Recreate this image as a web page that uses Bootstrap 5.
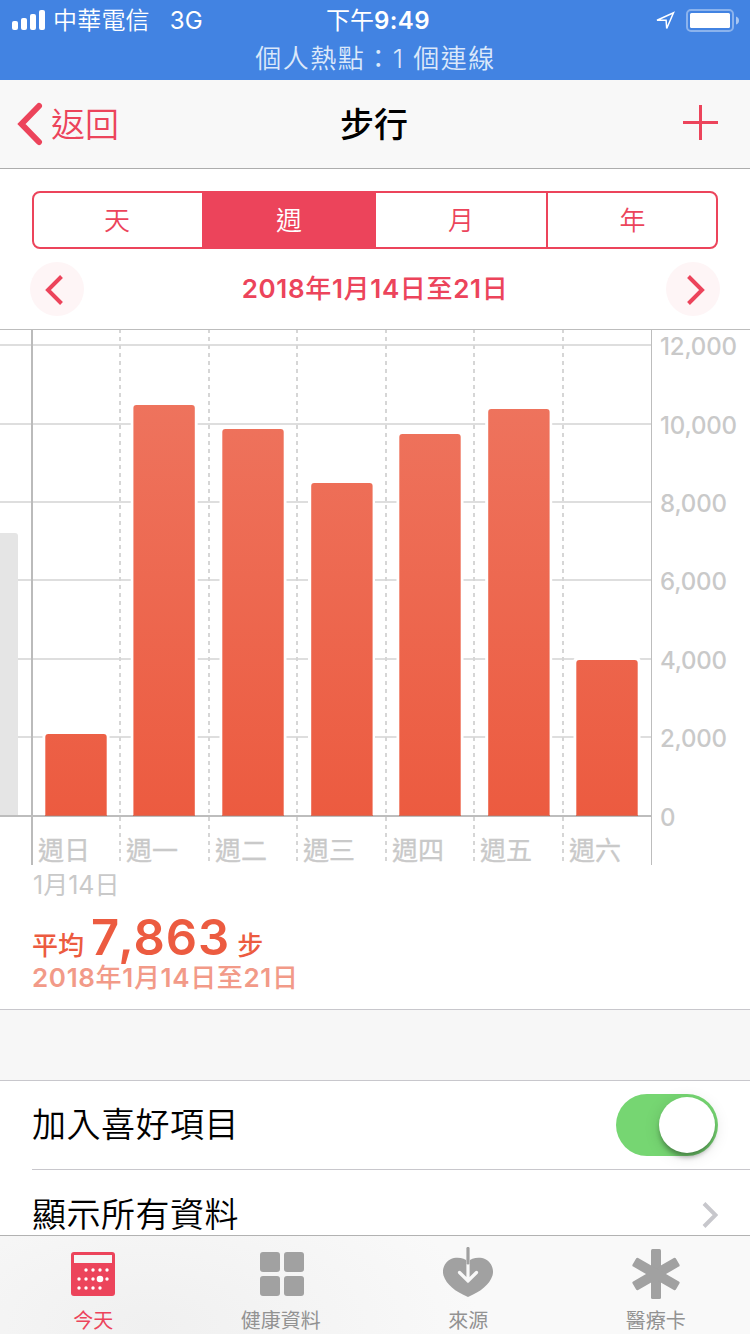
<!DOCTYPE html>
<html lang="zh-Hant">
<head>
<meta charset="utf-8">
<meta name="viewport" content="width=device-width, initial-scale=1">
<title>步行</title>
<link href="https://cdn.jsdelivr.net/npm/bootstrap@5.3.0/dist/css/bootstrap.min.css" rel="stylesheet">
<style>
  :root { --pink: #ec445b; --orange: #ec5b40; --line: #c8c7cc; }
  body { font-family: Inter, "Noto Sans CJK TC", sans-serif; color: #000; background: #fff; }
  svg { display: block; flex: none; }
  .phone { width: 750px; height: 1334px; }
  .statusbar { height: 80px; background: #4283e2; color: #fff; }
  .status-row { height: 40px; font-size: 24px; line-height: 40px; padding: 0 10px 0 12px; }
  .status-row span { padding-top: 2px; }
  .status-side { flex: 1 1 0; }
  .carrier { margin-left: 7px; font-weight: 350; letter-spacing: .2px; }
  .clock { margin-left: 4px; padding-top: 2px; font-weight: 400; }
  .clock b { font-weight: 600; letter-spacing: .4px; }
  .hotspot { height: 38px; line-height: 38px; font-size: 26px; letter-spacing: 1.5px; font-weight: 350; color: #dbe8fa; padding-left: 1px; }
  .topbar { height: 89px; background: #f8f8f8; border-bottom: 1px solid #adadad; padding: 0 32px 0 17px; font-size: 34px; line-height: 88px; }
  .back-text { margin-left: 8px; padding-top: 2px; font-weight: 350; }
  .topbar .heading { font-weight: 500; margin-left: 13px; padding-top: 2px; }
  .pinktext { color: var(--pink); }
  .segments { height: 58px; margin: 22px 32px 0; border: 2px solid var(--pink); border-radius: 8px; overflow: hidden; font-size: 26px; line-height: 56px; font-weight: 350; color: var(--pink); }
  .segments > div { flex: 0 0 172px; text-align: center; }
  .segments > div:first-child { flex-basis: 168px; padding-right: 2px; }
  .segments > div:last-child { flex: 1 1 0; padding-left: 1px; }
  .segments > div + div { border-left: 2px solid var(--pink); }
  .segments > .chosen { background: var(--pink); color: #fff; }
  .range { height: 80px; padding: 0 30px; font-size: 26px; line-height: 80px; font-weight: 600; letter-spacing: .65px; color: var(--pink); }
  .range b, .when b { font-weight: 500; }
  .round { width: 54px; height: 54px; border-radius: 50%; background: #fef5f6; }
  .summary { height: 144px; padding-left: 32px; color: var(--orange); }
  .firstday { color: #c9c9c9; font-size: 25px; line-height: 40px; font-weight: 400; height: 36px; padding-left: 1px; }
  .avg { height: 62px; padding-top: 12px; line-height: 30px; font-size: 26px; font-weight: 500; }
  .avg .figure-num { font-size: 49px; line-height: 50px; font-weight: 600; letter-spacing: 1px; margin-left: 7px; }
  .avg .comma { margin: 0 -1.5px 0 -2px; }
  .avg .unit { margin-left: 7px; }
  .when { font-size: 26px; line-height: 30px; font-weight: 600; letter-spacing: .65px; color: #f29a88; }
  .spacer { height: 72px; background: #f7f7f7; border-top: 1px solid var(--line); border-bottom: 1px solid var(--line); }
  .item { height: 88px; margin-left: 32px; padding-right: 32px; font-size: 34px; letter-spacing: .5px; line-height: 88px; font-weight: 350; flex: none; }
  .item + .item { height: 90px; border-top: 1px solid var(--line); }
  .toggle { width: 102px; height: 62px; border-radius: 31px; background: #76d672; padding: 3px; }
  .knob { width: 56px; height: 56px; border-radius: 50%; background: #fff; box-shadow: 0 5px 5px -1px rgba(0,0,0,.32), 0 3px 16px rgba(0,0,0,.13); }
  .tabs { height: 99px; flex: none; border-top: 1px solid #b2b2b2; color: #929292; font-size: 20px; line-height: 24px; background: radial-gradient(ellipse 330px 170px at 150px 90px, #f0f0f0, #f9f9f9); }
  .tabs > div { flex: 1 1 0; padding: 11px 1px 0 0; }
  .tabs span { margin-top: 10px; }
</style>
</head>
<body>
<div class="phone d-flex flex-column overflow-hidden">
  <header class="statusbar flex-shrink-0">
    <div class="status-row d-flex align-items-center">
      <div class="status-side d-flex align-items-center">
        <svg width="34" height="20" viewBox="0 0 34 20" fill="#fff"><rect y="11" width="6" height="9" rx="2"/><rect x="9" y="8" width="6" height="12" rx="2"/><rect x="18" y="4" width="6" height="16" rx="2"/><rect x="27" width="6" height="20" rx="2"/></svg>
        <span class="carrier">中華電信</span><span style="margin-left:20px">3G</span>
      </div>
      <div class="clock">下午<b>9:49</b></div>
      <div class="status-side d-flex justify-content-end align-items-center">
        <svg width="22" height="22" viewBox="0 0 22 22" fill="none" stroke="#fff" stroke-width="1.500"><path d="M3 11.200L19.500 3.800L12.700 19.500L12.100 11.200Z"/></svg>
        <svg style="margin-left:10px;margin-top:1px" width="54" height="24" viewBox="0 0 54 24"><rect x="1" y="1" width="46" height="21" rx="4" fill="none" stroke="#8bb3ed" stroke-width="2"/><rect x="4" y="4" width="40" height="15" rx="1.500" fill="#fff"/><path d="M50 7.500q3 1 3 4t-3 4z" fill="#a9c7f2"/></svg>
      </div>
    </div>
    <div class="hotspot text-center">個人熱點：1 個連線</div>
  </header>

  <nav class="topbar d-flex align-items-center flex-shrink-0">
    <div class="status-side d-flex align-items-center pinktext">
      <svg width="26" height="44" viewBox="0 0 26 44" fill="none" stroke="#ec445b" stroke-width="6" stroke-linecap="round"><path d="M22 4L4.500 22L22 40"/></svg>
      <span class="back-text">返回</span>
    </div>
    <div class="heading">步行</div>
    <div class="status-side d-flex justify-content-end">
      <svg class="mb-1" width="35" height="35" viewBox="0 0 35 35" fill="#ec445b"><path d="M16 0h3v16h16v3H19v16h-3V19H0v-3h16z"/></svg>
    </div>
  </nav>

  <div class="segments d-flex flex-shrink-0">
    <div>天</div><div class="chosen">週</div><div>月</div><div>年</div>
  </div>
  <div class="range d-flex align-items-center justify-content-between flex-shrink-0">
    <div class="round d-flex align-items-center justify-content-center"><svg width="54" height="54" viewBox="0 0 54 54" fill="none" stroke="#ec445b" stroke-width="4"><path d="M31.500 14.500L18 28L31.500 41.500"/></svg></div>
    <div>2018<b>年</b>1<b>月</b>14<b>日至</b>21<b>日</b></div>
    <div class="round d-flex align-items-center justify-content-center"><svg width="54" height="54" viewBox="0 0 54 54" fill="none" stroke="#ec445b" stroke-width="4"><path d="M22.500 14.500L36 28L22.500 41.500"/></svg></div>
  </div>

  <svg width="750" height="536" viewBox="0 329 750 536" font-size="24" font-weight="500" fill="#c9c9c9">
    <defs><linearGradient id="heat" gradientUnits="userSpaceOnUse" x1="0" y1="404" x2="0" y2="816"><stop offset="0" stop-color="#ee735d"/><stop offset="1" stop-color="#ec5b40"/></linearGradient></defs>
    <g stroke="#dedede" stroke-width="2"><path d="M0 345H651M0 424H651M0 502H651M0 580H651M0 659H651M0 737H651"/><path stroke="#bdbdbd" d="M0 816H651"/></g>
    <g stroke="#d6d6d6" stroke-width="2" stroke-dasharray="4 4"><path d="M120 329V863M209 329V863M297 329V863M386 329V863M474 329V863M563 329V863"/></g>
    <path d="M0 329.500H750M651.500 329V865" stroke="#bdbdbd"/>
    <path d="M0 533H15q3 0 3 3V815H0z" fill="#e5e5e5"/>
    <path d="M32 330V865" stroke="#bbb" stroke-width="2"/>
    <g fill="#fff">
      <rect x="42.500" y="731" width="67" height="84" rx="4"/><rect x="130.700" y="402" width="67" height="413" rx="4"/><rect x="219.500" y="426" width="67" height="389" rx="4"/><rect x="308" y="480" width="67" height="335" rx="4"/><rect x="396.500" y="431" width="67" height="384" rx="4"/><rect x="485.200" y="406" width="67" height="409" rx="4"/><rect x="573.500" y="657" width="67" height="158" rx="4"/>
    </g>
    <g fill="url(#heat)">
      <path d="M45.300 816V737q0-3 3-3H103.700q3 0 3 3V816z"/>
      <path d="M133.400 816V408q0-3 3-3H191.800q3 0 3 3V816z"/>
      <path d="M222.300 816V432q0-3 3-3H280.700q3 0 3 3V816z"/>
      <path d="M311.200 816V486q0-3 3-3H369.600q3 0 3 3V816z"/>
      <path d="M399.300 816V437q0-3 3-3H457.700q3 0 3 3V816z"/>
      <path d="M488.200 816V412q0-3 3-3H546.600q3 0 3 3V816z"/>
      <path d="M576.300 816V663q0-3 3-3H634.700q3 0 3 3V816z"/>
    </g>
    <path d="M45 815.500H107M133 815.500H195M222 815.500H284M311 815.500H373M399 815.500H461M488 815.500H550M576 815.500H638" stroke="#cf6a56" stroke-width="1"/>
    <text x="660" y="355" textLength="77">12,000</text><text x="660" y="434" textLength="77">10,000</text><text x="660" y="512" textLength="67">8,000</text><text x="660" y="590" textLength="67">6,000</text><text x="660" y="669" textLength="67">4,000</text><text x="660" y="747" textLength="67">2,000</text><text x="660" y="826">0</text>
    <g font-size="26" font-weight="400" stroke="#c9c9c9" stroke-width=".3"><text x="38" y="859.500">週日</text><text x="126" y="859.500">週一</text><text x="215" y="859.500">週二</text><text x="303" y="859.500">週三</text><text x="392" y="859.500">週四</text><text x="480" y="859.500">週五</text><text x="569" y="859.500">週六</text></g>
  </svg>

  <section class="summary flex-shrink-0">
    <div class="firstday">1月14日</div>
    <div class="avg d-flex align-items-baseline"><span>平均</span><span class="figure-num">7<span class="comma">,</span>863</span><span class="unit">步</span></div>
    <div class="when">2018<b>年</b>1<b>月</b>14<b>日至</b>21<b>日</b></div>
  </section>
  <div class="spacer flex-shrink-0"></div>

  <main class="flex-grow-1 overflow-hidden" style="min-height:0">
    <div class="item d-flex align-items-center justify-content-between">
      <span>加入喜好項目</span>
      <div class="toggle d-flex justify-content-end"><div class="knob"></div></div>
    </div>
    <div class="item d-flex align-items-center justify-content-between">
      <span>顯示所有資料</span>
      <svg width="16" height="26" viewBox="0 0 16 26" fill="none" stroke="#c7c7cc" stroke-width="4"><path d="M2 1.500L13.500 13L2 24.500"/></svg>
    </div>
  </main>

  <footer class="tabs d-flex text-center">
    <div class="d-flex flex-column align-items-center pinktext">
      <svg width="52" height="52" viewBox="0 0 52 52"><rect x="4" y="5" width="44" height="44" rx="3" fill="#ec445b"/><path fill="#f5f5f5" d="M7 8h38v8H7z"/><g fill="#fff"><circle cx="19" cy="23" r="1.700"/><circle cx="26" cy="23" r="1.700"/><circle cx="33" cy="23" r="1.700"/><circle cx="40" cy="23" r="1.700"/><circle cx="12" cy="32" r="1.700"/><circle cx="19" cy="32" r="1.700"/><circle cx="26" cy="32" r="1.700"/><circle cx="33" cy="32" r="3.300"/><circle cx="40" cy="32" r="1.700"/><circle cx="12" cy="41" r="1.700"/><circle cx="19" cy="41" r="1.700"/><circle cx="26" cy="41" r="1.700"/><circle cx="33" cy="41" r="1.700"/></g></svg>
      <span>今天</span>
    </div>
    <div class="d-flex flex-column align-items-center">
      <svg width="52" height="52" viewBox="0 0 52 52" fill="#a1a1a1"><rect x="5" y="5" width="20" height="20" rx="3"/><rect x="29" y="5" width="20" height="20" rx="3"/><rect x="5" y="29" width="20" height="20" rx="3"/><rect x="29" y="29" width="20" height="20" rx="3"/></svg>
      <span>健康資料</span>
    </div>
    <div class="d-flex flex-column align-items-center">
      <svg width="52" height="52" viewBox="0 0 52 52" fill="none"><path fill="#a1a1a1" d="M26 14.500C22.500 10.500 14 9.500 8.500 12.200C2.500 15.500 -.3 22 1.500 28.500C4.500 37.500 13 44.500 26 50C39 44.500 47.500 37.500 50.500 28.500C52.300 22 49.500 15.500 43.500 12.200C38 9.500 29.500 10.500 26 14.500z"/><path d="M26 16V34M17.500 25.500L26 34L34.500 25.500" stroke="#f9f9f9" stroke-width="3.200" stroke-linecap="round"/><path d="M26 3V16" stroke="#f9f9f9" stroke-width="3.600"/><path d="M26 1.500V16" stroke="#a1a1a1" stroke-width="3.200" stroke-linecap="round"/></svg>
      <span>來源</span>
    </div>
    <div class="d-flex flex-column align-items-center">
      <svg width="52" height="52" viewBox="0 0 52 52" fill="#a1a1a1"><rect x="21" y="2" width="10" height="50" rx="1.500"/><rect x="21" y="2" width="10" height="50" rx="1.500" transform="rotate(60 26 27)"/><rect x="21" y="2" width="10" height="50" rx="1.500" transform="rotate(120 26 27)"/></svg>
      <span>醫療卡</span>
    </div>
  </footer>
</div>
<script src="https://cdn.jsdelivr.net/npm/bootstrap@5.3.0/dist/js/bootstrap.bundle.min.js"></script>
</body>
</html>
